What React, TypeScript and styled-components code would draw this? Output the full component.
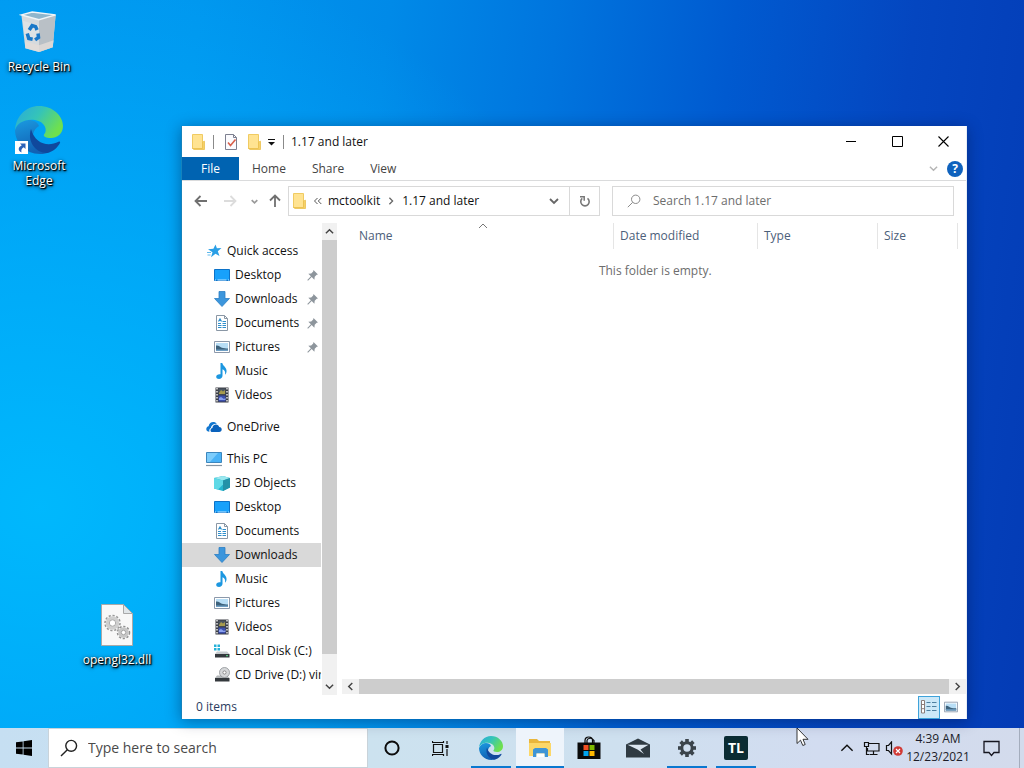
import React from "react";
import styled, { createGlobalStyle, css } from "styled-components";

const GlobalStyle = createGlobalStyle`
  *, *::before, *::after { box-sizing: border-box; }
  body { margin: 0; }
  body, button, input, table {
    font-family: "Open Sans", "Noto Sans", sans-serif;
    font-size: 12px;
    line-height: 16px;
  }
  button, input { border: 0; padding: 0; margin: 0; background: none; color: inherit; border-radius: 0; }
  svg { display: block; flex: none; }
  ul { list-style: none; margin: 0; padding: 0; }
`;

/* ---------- desktop ---------- */

const Screen = styled.div`
  min-height: 100vh;
  display: flex;
  flex-direction: column;
  overflow: hidden;
  background:
    radial-gradient(ellipse 60% 75% at 4% 66%, rgba(0, 190, 255, 0.85), rgba(0, 184, 255, 0.6) 40%, rgba(0, 180, 255, 0) 100%),
    linear-gradient(97deg, #0098f0 0%, #0095ee 18%, #008ae8 35%, #0075de 50%, #005ad0 66%, #0446c0 82%, #043bb5 100%);
`;

const Desktop = styled.main`
  position: relative;
  flex: 1;
`;

const Shortcut = styled.button<{ $x: number; $y: number }>`
  position: absolute;
  left: ${(p) => p.$x}px;
  top: ${(p) => p.$y}px;
  width: 78px;
  display: flex;
  flex-direction: column;
  align-items: center;
  gap: 4px;
  color: #fff;
  line-height: 15px;
  text-shadow: 1px 1px 1px #000, 1px 1px 2px #000, 0 1px 4px rgba(0, 0, 0, 0.9);
`;

/* ---------- explorer window ---------- */

const Window = styled.section`
  position: absolute;
  left: 181px;
  right: 57px;
  top: 126px;
  bottom: 9px;
  display: flex;
  flex-direction: column;
  background: #fff;
  border-left: 1px solid #1583bd;
  border-right: 1px solid #e8eef6;
  box-shadow: 0 2px 14px rgba(0, 20, 60, 0.42);
  color: #111;
`;

const TitleBar = styled.header`
  height: 31px;
  display: flex;
  align-items: center;
  padding-left: 9px;
`;

const Title = styled.h1`
  flex: 1;
  margin: 0;
  padding-left: 7px;
  font-size: 12px;
  font-weight: 400;
`;

const QuickButton = styled.button<{ $w: number }>`
  width: ${(p) => p.$w}px;
  height: 24px;
  display: flex;
  align-items: center;
  justify-content: center;
`;

const Separator = styled.span`
  width: 1px;
  height: 14px;
  background: #8a8a8a;
`;

const CaptionButton = styled.button`
  width: 46px;
  height: 31px;
  display: flex;
  align-items: center;
  justify-content: center;
`;

const TabRow = styled.nav`
  height: 24px;
  display: flex;
  align-items: stretch;
  border-bottom: 1px solid #dadbdc;
`;

const Tab = styled.button<{ $file?: boolean }>`
  padding: 0 ${(p) => (p.$file ? 19 : 13)}px;
  color: #444;
  ${(p) =>
    p.$file &&
    css`
      background: #0063b1;
      color: #fff;
    `}
`;

const RibbonTools = styled.div`
  margin-left: auto;
  padding-right: 3px;
  display: flex;
  align-items: center;
  gap: 9px;
`;

const HelpButton = styled.button`
  width: 16px;
  height: 16px;
  border-radius: 50%;
  background: #0f62bd;
  color: #fff;
  font-weight: 700;
`;

const AddressRow = styled.div`
  height: 42px;
  display: flex;
  align-items: center;
  padding: 0 12px 2px 7px;
`;

const NavButton = styled.button<{ $w: number }>`
  width: ${(p) => p.$w}px;
  height: 24px;
  display: flex;
  align-items: center;
  justify-content: center;
`;

const AddressBox = styled.div`
  flex: 0 1 312px;
  height: 30px;
  display: flex;
  align-items: center;
  border: 1px solid #d9d9d9;
  padding-left: 3px;
`;

const Crumb = styled.button`
  white-space: nowrap;
`;

const CrumbGap = styled.span<{ $w: number }>`
  width: ${(p) => p.$w}px;
  display: flex;
  justify-content: center;
`;

const BoxButton = styled.button<{ $divided?: boolean }>`
  width: 30px;
  height: 28px;
  display: flex;
  align-items: center;
  justify-content: center;
  ${(p) => (p.$divided ? "border-left: 1px solid #d9d9d9;" : "margin-left: auto;")}
`;

const SearchBox = styled.label`
  flex: 1;
  height: 30px;
  margin-left: 12px;
  padding-left: 14px;
  display: flex;
  align-items: center;
  gap: 12px;
  border: 1px solid #d9d9d9;
`;

const SearchInput = styled.input`
  flex: 1;
  min-width: 0;
  outline: none;
  &::placeholder {
    color: #6d6d6d;
    opacity: 1;
  }
`;

const Body = styled.div`
  flex: 1;
  min-height: 0;
  display: flex;
`;

const TreePane = styled.nav`
  width: 139px;
  padding-top: 16px;
  overflow: hidden;
`;

const TreeGroup = styled.ul`
  margin-bottom: 8px;
`;

const TreeItem = styled.button<{ $root?: boolean; $selected?: boolean }>`
  width: 100%;
  height: 24px;
  padding-left: ${(p) => (p.$root ? 24 : 32)}px;
  display: flex;
  align-items: center;
  gap: 5px;
  white-space: nowrap;
  background: ${(p) => (p.$selected ? "#d9d9d9" : "transparent")};
`;

const Pin = styled.span`
  margin-left: auto;
  padding-right: 3px;
`;

const VScroll = styled.div`
  width: 15px;
  margin-left: 1px;
  display: flex;
  flex-direction: column;
  background: #f1f1f1;
`;

const HScroll = styled.div`
  height: 15px;
  margin: 0 0 1px 5px;
  display: flex;
  background: #f1f1f1;
`;

const ScrollButton = styled.button`
  flex: 0 0 17px;
  display: flex;
  align-items: center;
  justify-content: center;
`;

const Track = styled.div<{ $rest?: number }>`
  flex: 1;
  display: flex;
  padding-bottom: ${(p) => p.$rest ?? 0}px;
`;

const Thumb = styled.span`
  flex: 1;
  background: #cdcdcd;
`;

const FilePane = styled.div`
  flex: 1;
  min-width: 0;
  display: flex;
  flex-direction: column;
`;

const FileArea = styled.div`
  flex: 1;
  padding: 0 8px 0 16px;
`;

const FileTable = styled.table`
  width: 100%;
  table-layout: fixed;
  border-collapse: collapse;
`;

const HeadCell = styled.th<{ $w?: number }>`
  ${(p) => p.$w && `width: ${p.$w}px;`}
  position: relative;
  height: 26px;
  padding: 0 0 0 6px;
  text-align: left;
  font-weight: 400;
  color: #4c607a;
  border-right: 1px solid #e5e5e5;
`;

const SortMark = styled.span`
  position: absolute;
  top: -2px;
  left: 50%;
  transform: translateX(-50%);
`;

const EmptyCell = styled.td`
  padding: 14px 0 0;
  text-align: center;
  color: #6d6d6d;
`;

const StatusBar = styled.footer`
  height: 24px;
  padding: 0 4px 0 14px;
  display: flex;
  align-items: center;
  color: #2a3c60;
`;

const ViewButton = styled.button<{ $on?: boolean }>`
  width: 22px;
  height: 23px;
  display: flex;
  align-items: center;
  justify-content: center;
  ${(p) => p.$on && "background: #cce8f8; border: 1px solid #3fa3da;"}
`;

const Spacer = styled.span`
  flex: 1;
`;

/* ---------- taskbar ---------- */

const Taskbar = styled.footer`
  height: 40px;
  display: flex;
  align-items: stretch;
  background: linear-gradient(90deg, #c6dff2 0%, #cce2ef 36%, #cee0ef 60%, #d2dcf0 80%, #d3dbec 100%);
`;

const TaskButton = styled.button<{ $run?: boolean; $active?: boolean; $first?: boolean }>`
  position: relative;
  width: 48px;
  margin-left: ${(p) => (p.$first ? 3 : p.$run === undefined ? 0 : 1)}px;
  display: flex;
  align-items: center;
  justify-content: center;
  background: ${(p) => (p.$active ? "#eef4fb" : "transparent")};
  &::after {
    content: "";
    position: absolute;
    bottom: 0;
    left: ${(p) => (p.$active ? 0 : 4)}px;
    right: ${(p) => (p.$active ? 0 : 4)}px;
    height: 2px;
    background: ${(p) => (p.$run ? "#0a78d0" : "transparent")};
  }
`;

const TaskSearch = styled.label`
  width: 320px;
  padding-left: 11px;
  display: flex;
  align-items: center;
  gap: 10px;
  background: #fff;
  border: 1px solid #c9d3da;
`;

const TaskSearchInput = styled.input`
  flex: 1;
  min-width: 0;
  font-size: 14px;
  line-height: 20px;
  outline: none;
  &::placeholder {
    color: #4a4a4a;
    opacity: 1;
  }
`;

const TrayButton = styled.button<{ $w: number }>`
  width: ${(p) => p.$w}px;
  display: flex;
  align-items: center;
  justify-content: center;
`;

const Clock = styled.button`
  width: 66px;
  line-height: 18px;
  color: #1c1c28;
  text-align: center;
`;

const ShowDesktop = styled.button`
  width: 5px;
  border-left: 1px solid #a4adbd;
`;

const TlBadge = styled.span`
  width: 24px;
  height: 24px;
  border-radius: 2px;
  background: #0b2c33;
  color: #fff;
  font-size: 14px;
  font-weight: 700;
  line-height: 24px;
`;

const Pointer = styled.span`
  position: absolute;
  left: 796px;
  bottom: -19px;
  z-index: 5;
`;

/* ---------- icons ---------- */

type IconProps = { size?: number };

const FolderIcon = () => (
  <svg width="15" height="18" viewBox="0 0 15 18">
    <path d="M1.500 1.500h10v14h-10z" fill="#ffe391" stroke="#f0cb62" />
    <path d="M11.500 9l2-.8v8.300H3l-1.500-1h10z" fill="#f6d168" stroke="#ebc04e" strokeWidth=".8" />
  </svg>
);

const CheckDocIcon = () => (
  <svg width="14" height="18" viewBox="0 0 14 18">
    <path d="M1.500 1.500h8l3 3v12h-11z" fill="#fbfbfe" stroke="#7d8090" />
    <path d="M9.500 1.500v3h3" fill="none" stroke="#7d8090" />
    <path d="M4 9.500l2.500 3 5-6" fill="none" stroke="#d8604c" strokeWidth="1.600" />
  </svg>
);

const DropMark = () => (
  <svg width="9" height="9" viewBox="0 0 9 9">
    <path d="M1 2.500h7" stroke="#111" />
    <path d="M1 5h7L4.500 8.500z" fill="#111" />
  </svg>
);

const Chevron = ({ dir, color = "#444", w = 9, stroke = 1.6 }: { dir: "up" | "down" | "left" | "right"; color?: string; w?: number; stroke?: number }) => {
  const d = {
    up: "M1 7l4-4 4 4",
    down: "M1 3l4 4 4-4",
    left: "M7 1L3 5l4 4",
    right: "M3 1l4 4-4 4",
  }[dir];
  return (
    <svg width={w} height={w} viewBox="0 0 10 10">
      <path d={d} fill="none" stroke={color} strokeWidth={stroke} />
    </svg>
  );
};

const Arrow = ({ rotate = 0, color }: { rotate?: number; color: string }) => (
  <svg width="14" height="14" viewBox="0 0 14 14">
    <path d="M13 7H2M6.500 2L1.500 7l5 5" transform={`rotate(${rotate} 7 7)`} fill="none" stroke={color} strokeWidth="1.8" />
  </svg>
);

const RefreshIcon = () => (
  <svg width="12" height="13" viewBox="0 0 12 13">
    <path d="M8.500 3.300A4.200 4.200 0 1 1 3.300 3.400" fill="none" stroke="#777" strokeWidth="1.600" />
    <path d="M1 1.800h4.200v4" fill="none" stroke="#777" strokeWidth="1.500" />
  </svg>
);

const Magnifier = ({ size = 14, color = "#8a8a8a", stroke = 1 }: IconProps & { color?: string; stroke?: number }) => (
  <svg width={size} height={size} viewBox="0 0 14 14">
    <circle cx="8.700" cy="5.300" r="4.200" fill="none" stroke={color} strokeWidth={stroke} />
    <path d="M5.700 8.300L.8 13.200" stroke={color} strokeWidth={stroke} />
  </svg>
);

const StarIcon = () => (
  <svg width="16" height="16" viewBox="0 0 16 16">
    <path d="M9.500 1.500l1.400 3.800 4.600-.3-3.700 3.300 1.700 4.700-4-2.200-4.500 3.500 1.500-5L2 6.200l5.400-.5z" fill="#2a9fe6" />
    <path d="M1 9.500h4M1.500 12h3" stroke="#5fb9ec" />
  </svg>
);

const DesktopIcon = () => (
  <svg width="16" height="16" viewBox="0 0 16 16">
    <path d="M.5 2.500h15v11H.5z" fill="#18a1fb" stroke="#0c72c8" />
    <path d="M1 13h14" stroke="#bfe4ff" strokeDasharray="1 1.500 9 1.500" />
  </svg>
);

const DownloadIcon = () => (
  <svg width="16" height="16" viewBox="0 0 16 16">
    <path d="M5 .5h6v7h4.500L8 15.500.5 7.500H5z" fill="#3c96dc" stroke="#2b7fc4" strokeWidth=".8" />
  </svg>
);

const DocumentIcon = () => (
  <svg width="16" height="16" viewBox="0 0 16 16">
    <path d="M2.500.5h8l3 3v12h-11z" fill="#fff" stroke="#8a97a5" />
    <path d="M10.500.5v3h3" fill="none" stroke="#8a97a5" />
    <path d="M4.500 6.500L6 4l1.500 2.500M8.500 6.500h3.500M4 8.500h3M8.500 8.500h3.500M4 10.500h3.500M8.500 10.500h3.500M4 12.500h3.500M8.500 12.500h3.500" fill="none" stroke="#2f8fcc" strokeWidth="1.200" />
  </svg>
);

const PictureIcon = ({ size = 16 }: IconProps) => (
  <svg width={size} height={size} viewBox="0 0 16 16">
    <path d="M.5 2.500h15v11H.5z" fill="#fff" stroke="#8c99ab" />
    <path d="M2 4h12v8H2z" fill="#b8def6" />
    <path d="M2 6.500c3-.5 4 2 7 2.500s4 .5 5 .500V12H2z" fill="#3d627c" />
    <path d="M2 10.500h12V12H2z" fill="#6f9fc4" />
  </svg>
);

const MusicIcon = () => (
  <svg width="16" height="16" viewBox="0 0 16 16">
    <path d="M6.500 0H8.300c.3 3 5 4.300 4.200 9-.2 1.200-.9 2.300-1.500 2.800.7-3-.4-4.800-2.500-5.500v6.400c0 1.900-1.600 3.300-3.500 3.300-1.600 0-2.800-1-2.800-2.300 0-1.700 2-2.900 4.300-2.400z" fill="#1c97e0" />
  </svg>
);

const VideoIcon = () => (
  <svg width="16" height="16" viewBox="0 0 16 16">
    <path d="M1.500.5h13v15h-13z" fill="#3a3d44" />
    <path d="M3 1v14M13 1v14" stroke="#e6e6e6" strokeWidth="1.500" strokeDasharray="1.500 1.500" />
    <path d="M4.500 1.500h7v6h-7z" fill="#4b5560" />
    <path d="M5 6l2-3 2 1.500 2-1.500v4H5z" fill="#a79b4d" />
    <path d="M4.500 8.500h7v6h-7z" fill="#3b4fae" />
    <path d="M5 11l2-1 3 2 1.500-1v2H5z" fill="#8aa0ee" />
  </svg>
);

const OneDriveIcon = () => (
  <svg width="16" height="16" viewBox="0 0 16 16">
    <path d="M.3 10.200c0-1.700 1-2.700 2.300-3C3 4.500 5 3 7.200 3c1.500 0 2.800.6 3.600 1.800C7.500 4.500 5.200 6.500 4.900 9c-1.400.5-1.900 2-1.500 3.700C1.500 12.500.3 11.700.3 10.200z" fill="#1277d0" />
    <path d="M4.500 11.500c0-1.500.9-2.200 1.900-2.400.1-2.200 1.700-3.600 3.500-3.600 1.700 0 2.900 1 3.300 2.500 1.600 0 2.500 1.100 2.500 2.500s-1 2.500-2.600 2.500H6.500c-1.200 0-2-.5-2-1.500z" fill="#0a62bc" />
  </svg>
);

const PcIcon = () => (
  <svg width="18" height="16" viewBox="0 0 18 16">
    <path d="M1.500 1.500h15v10h-15z" fill="#49b2f6" stroke="#3c86bd" />
    <path d="M2 2h11L5 11H2z" fill="#7cccfb" />
    <path d="M1 14.500h16" stroke="#8595a3" strokeWidth="1.200" />
  </svg>
);

const CubeIcon = () => (
  <svg width="16" height="16" viewBox="0 0 16 16">
    <path d="M0 3l9-2 7 2v9.500L9 16l-9-2.500z" fill="#23b5cf" />
    <path d="M0 3l9-2 7 2-7 2.500z" fill="#9be7ee" />
    <path d="M9 5.500l7-2.500v9.500L9 16z" fill="#2392a8" />
    <path d="M0 3l9 2.500v4L4 14.500l-4-1z" fill="#5fd9e6" />
  </svg>
);

const DiskIcon = () => (
  <svg width="16" height="16" viewBox="0 0 16 16">
    <path d="M0 1.500h2.500V4H0zM3.500 1.500H6V4H3.500zM0 5h2.500v2.500H0zM3.500 5H6v2.500H3.500z" fill="#25b1d8" />
    <path d="M3 8.500h10l2.500 2.500H1z" fill="#c7cbce" />
    <path d="M1 11h14.500v3.500H1z" fill="#34393d" />
    <path d="M12 12.700h2" stroke="#5ee08a" />
  </svg>
);

const CdIcon = () => (
  <svg width="16" height="16" viewBox="0 0 16 16">
    <path d="M3 8.500h10l2.500 2.500H1z" fill="#b4b8ba" />
    <path d="M1 11h14.500v3.500H1z" fill="#34393d" />
    <circle cx="10.500" cy="5.500" r="5" fill="#d5d7d9" stroke="#8e9295" strokeWidth=".8" />
    <circle cx="10.500" cy="5.500" r="1.600" fill="#fff" stroke="#777" strokeWidth=".8" />
  </svg>
);

const PinIcon = () => (
  <svg width="11" height="11" viewBox="0 0 11 11">
    <path d="M6.500 0L11 4.500l-1.300.3-2 2-.3 2.900-2.700-2.600L1 10.700l-.7-.7 3.600-3.700L1.300 3.700l2.900-.3 2-2z" fill="#8d959c" />
  </svg>
);

const DetailsIcon = () => (
  <svg width="16" height="14" viewBox="0 0 16 14">
    <path d="M.5.5h3v12.500h-3z" fill="#fff" stroke="#8b7d7a" />
    <path d="M.5 4.500h3M.5 8.700h3" stroke="#8b7d7a" />
    <path d="M5.500 2.500h4M11 2.500h4.500M5.500 6.500h4M11 6.500h4.500M5.500 10.500h4M11 10.500h4.500" stroke="#4f7f9f" />
  </svg>
);

const RecycleBinIcon = () => (
  <svg width="40" height="45" viewBox="0 0 40 46">
    <path d="M2 5l18 5 17-5-3 33-14 5-14-4z" fill="#d6dadd" />
    <path d="M20 10l17-5-3 33-14 5z" fill="#b9c0c6" />
    <path d="M2 5L13 2l24 3-17 5z" fill="#8fb6cc" stroke="#f1f5f7" strokeWidth="1.500" />
    <path d="M3.500 11l16.500 5v14L5.500 27z" fill="#e3e8ea" opacity=".6" />
    <path d="M5.500 32l14.500 4 15-5-1 7-14 5-14-4z" fill="#e4dcd8" opacity=".8" />
    <path d="M10 20.500l3-4.500 3.500 1 1.500 3.500M8 24l1.500 5 4 .800M16 30.500l3.500-2.500-.5-4" fill="none" stroke="#1a78c8" strokeWidth="3.600" />
  </svg>
);

const EdgeLogo = ({ size = 48 }: IconProps) => {
  const id = `edge${size}`;
  return (
    <svg width={size} height={size} viewBox="0 0 48 48">
      <defs>
        <linearGradient id={`${id}a`} x1="0" y1="0" x2="1" y2="0.500">
          <stop offset="0" stopColor="#28a9dc" />
          <stop offset=".5" stopColor="#35c4b8" />
          <stop offset="1" stopColor="#6fe04e" />
        </linearGradient>
        <linearGradient id={`${id}b`} x1="0" y1="0" x2="0.300" y2="1">
          <stop offset="0" stopColor="#1b9ae0" />
          <stop offset="1" stopColor="#1161b4" />
        </linearGradient>
      </defs>
      <path d="M0 24C0 36 10 48 25 48c4 0 7-.8 9-1.800-11-1-18-9-16-18 1-4 3-6.500 6-8.200C22 13 6 10 0 24z" fill={`url(#${id}b)`} />
      <path d="M0 24C1 10 11 0 24 0c14 0 24 10 24 20 0 8-6 12-12 12-5 0-8-1.500-7-3.500 4-4 1-13-9-14.500C10 12.500 2 17 0 24z" fill={`url(#${id}a)`} />
      <path d="M16 23c-4 12 4 24 16 24 6-1 11-6 13-10 .5-1-.5-1.800-1.500-1.200C33 41 20 38 16 23z" fill="#10489c" />
    </svg>
  );
};

const ShortcutMark = styled.span`
  position: absolute;
  left: 15px;
  top: 35px;
  width: 13px;
  height: 13px;
  background: #fff;
`;

const DllIcon = () => {
  const teeth = "2.200 1.700";
  return (
    <svg width="32" height="44" viewBox="0 0 32 44">
      <path d="M.5.5h22l9 9v32H.5z" fill="#f8f8f8" stroke="#a9a9a9" />
      <path d="M22.500.5v9h9z" fill="#e1e6e9" stroke="#a9a9a9" />
      <circle cx="11.500" cy="19" r="7.500" fill="none" stroke="#999" strokeWidth="1.600" strokeDasharray={teeth} />
      <circle cx="11.500" cy="19" r="5" fill="none" stroke="#cfcfcf" strokeWidth="3.500" />
      <circle cx="11.500" cy="19" r="3.200" fill="#fff" stroke="#999" strokeWidth=".8" />
      <circle cx="22.500" cy="28.500" r="6" fill="none" stroke="#909090" strokeWidth="1.500" strokeDasharray={teeth} />
      <circle cx="22.500" cy="28.500" r="3.800" fill="none" stroke="#c6c6c6" strokeWidth="3" />
      <circle cx="22.500" cy="28.500" r="2.200" fill="#fff" stroke="#909090" strokeWidth=".8" />
    </svg>
  );
};

const StartIcon = () => (
  <svg width="16" height="16" viewBox="0 0 16 16">
    <path d="M0 2.300L6.700 1.400v6.200H0zM7.500 1.300L16 0v7.600H7.500zM0 8.400h6.700v6.200L0 13.700zM7.500 8.400H16V16l-8.500-1.200z" fill="#000" />
  </svg>
);

const CortanaIcon = () => (
  <svg width="16" height="16" viewBox="0 0 16 16">
    <circle cx="8" cy="8" r="6.600" fill="none" stroke="#0c0c0c" strokeWidth="2" />
  </svg>
);

const TaskViewIcon = () => (
  <svg width="17" height="15" viewBox="0 0 17 15">
    <path d="M1.500 3.500h9v8h-9zM.5 0v1.500h11V0M.5 15v-1.500h11V15M15 0v3M15 8v7" fill="none" stroke="#111" strokeWidth="1.200" />
    <path d="M13.500 4h3v3h-3z" fill="#111" />
  </svg>
);

const ExplorerIcon = () => (
  <svg width="24" height="20" viewBox="0 0 24 20">
    <path d="M1 1h8l2 2h11v15H1z" fill="#e9b63c" />
    <path d="M1 5h22v13H1z" fill="#fcd768" />
    <path d="M5 19v-7.500L7 10h11l2 1.500V19h-3.500v-3.500h-8V19z" fill="#3f95d6" />
    <path d="M8.500 15.500h8V19h-8z" fill="#fff" />
  </svg>
);

const StoreIcon = () => (
  <svg width="24" height="24" viewBox="0 0 24 24">
    <path d="M8 7V4.500C8 2.500 9.500 1 11.700 1s3.800 1.500 3.800 3.500V7M10 7V4.500C10.500 2 15 1 17 4.500V7" fill="none" stroke="#0a0a0a" strokeWidth="1.200" />
    <path d="M.5 6.500h23V23H.5z" fill="#0a0a0a" />
    <path d="M6.500 9h5v5h-5z" fill="#f25022" />
    <path d="M12.500 9h5v5h-5z" fill="#7fba00" />
    <path d="M6.500 15h5v5h-5z" fill="#00a4ef" />
    <path d="M12.500 15h5v5h-5z" fill="#ffb900" />
  </svg>
);

const MailIcon = () => (
  <svg width="24" height="20" viewBox="0 0 24 20">
    <path d="M0 6.500L12 .5l12 6V19.500H0z" fill="#2f3a42" />
    <path d="M1.500 6.800h21L14.500 11.500l3.500 4.500-6.500-4.500z" fill="#dbe6f0" />
  </svg>
);

const GearIcon = () => (
  <svg width="20" height="20" viewBox="0 0 20 20">
    <circle cx="10" cy="10" r="5.200" fill="none" stroke="#3b444b" strokeWidth="3" />
    {[0, 45, 90, 135, 180, 225, 270, 315].map((a) => (
      <path key={a} d="M8.200 1h3.600v3.500H8.200z" fill="#3b444b" transform={`rotate(${a} 10 10)`} />
    ))}
  </svg>
);

const NetworkIcon = () => (
  <svg width="17" height="15" viewBox="0 0 17 15">
    <path d="M6 2.500h10v7.500H4.500V7M10.500 10v3.500M7 13.500h7.500" fill="none" stroke="#111" strokeWidth="1.200" />
    <path d="M1.500 1.500h4v4h-4zM3.500 5.500V13.500h3" fill="none" stroke="#111" strokeWidth="1.200" />
  </svg>
);

const MutedIcon = () => (
  <svg width="18" height="15" viewBox="0 0 18 15">
    <path d="M1.500 4.500h2l3-3.500v12l-3-3.500h-2z" fill="none" stroke="#111" strokeWidth="1.200" />
    <circle cx="13" cy="10" r="4.800" fill="#d13a36" />
    <path d="M11 8l4 4M15 8l-4 4" stroke="#fff" strokeWidth="1.200" />
  </svg>
);

const NoticeIcon = () => (
  <svg width="17" height="17" viewBox="0 0 17 17">
    <path d="M1 1.500h15v11h-5l-2.500 3-2.500-3H1z" fill="none" stroke="#15151f" strokeWidth="1.300" />
  </svg>
);

/* ---------- data ---------- */

type Node = { label: string; icon: React.ReactNode; pinned?: boolean; selected?: boolean };

const tree: { root: Node; items: Node[] }[] = [
  {
    root: { label: "Quick access", icon: <StarIcon /> },
    items: [
      { label: "Desktop", icon: <DesktopIcon />, pinned: true },
      { label: "Downloads", icon: <DownloadIcon />, pinned: true },
      { label: "Documents", icon: <DocumentIcon />, pinned: true },
      { label: "Pictures", icon: <PictureIcon />, pinned: true },
      { label: "Music", icon: <MusicIcon /> },
      { label: "Videos", icon: <VideoIcon /> },
    ],
  },
  { root: { label: "OneDrive", icon: <OneDriveIcon /> }, items: [] },
  {
    root: { label: "This PC", icon: <PcIcon /> },
    items: [
      { label: "3D Objects", icon: <CubeIcon /> },
      { label: "Desktop", icon: <DesktopIcon /> },
      { label: "Documents", icon: <DocumentIcon /> },
      { label: "Downloads", icon: <DownloadIcon />, selected: true },
      { label: "Music", icon: <MusicIcon /> },
      { label: "Pictures", icon: <PictureIcon /> },
      { label: "Videos", icon: <VideoIcon /> },
      { label: "Local Disk (C:)", icon: <DiskIcon /> },
      { label: "CD Drive (D:) virt", icon: <CdIcon /> },
    ],
  },
];

const IconSlot = styled.span`
  flex: none;
  width: 16px;
  display: flex;
  justify-content: center;
`;

const TreeRow = ({ node, root }: { node: Node; root?: boolean }) => (
  <li>
    <TreeItem $root={root} $selected={node.selected}>
      <IconSlot>{node.icon}</IconSlot>
      {node.label}
      {node.pinned && (
        <Pin>
          <PinIcon />
        </Pin>
      )}
    </TreeItem>
  </li>
);

export default function App() {
  return (
    <Screen>
      <GlobalStyle />
      <Desktop>
        <Shortcut $x={0} $y={10}>
          <RecycleBinIcon />
          Recycle Bin
        </Shortcut>
        <Shortcut $x={0} $y={106}>
          <EdgeLogo />
          <ShortcutMark>
            <svg width="13" height="13" viewBox="0 0 13 13">
              <path d="M5 2.500h5.500V8L8.700 6.200C6.500 7.500 6 9 6.500 11.500 3 10 2.500 6.500 6.800 4.300z" fill="#2a62b8" />
            </svg>
          </ShortcutMark>
          Microsoft Edge
        </Shortcut>
        <Shortcut $x={78} $y={604}>
          <DllIcon />
          opengl32.dll
        </Shortcut>

        <Window aria-label="1.17 and later">
          <TitleBar>
            <FolderIcon />
            <QuickButton as="span" $w={7} />
            <Separator />
            <QuickButton $w={34} aria-label="Properties">
              <CheckDocIcon />
            </QuickButton>
            <QuickButton $w={12} aria-label="New folder">
              <FolderIcon />
            </QuickButton>
            <QuickButton $w={23} aria-label="Customize toolbar">
              <DropMark />
            </QuickButton>
            <Separator />
            <Title>1.17 and later</Title>
            <CaptionButton aria-label="Minimize">
              <svg width="10" height="10" viewBox="0 0 10 10">
                <path d="M0 4.500h10" stroke="#000" />
              </svg>
            </CaptionButton>
            <CaptionButton aria-label="Maximize">
              <svg width="11" height="11" viewBox="0 0 11 11">
                <path d="M.5.5h10v10H.5z" fill="none" stroke="#000" />
              </svg>
            </CaptionButton>
            <CaptionButton aria-label="Close">
              <svg width="11" height="11" viewBox="0 0 11 11">
                <path d="M.5.5l10 10M10.500.5l-10 10" stroke="#000" strokeWidth="1.100" />
              </svg>
            </CaptionButton>
          </TitleBar>

          <TabRow>
            <Tab $file>File</Tab>
            <Tab>Home</Tab>
            <Tab>Share</Tab>
            <Tab>View</Tab>
            <RibbonTools>
              <button aria-label="Expand ribbon">
                <Chevron dir="down" color="#b5b5b5" />
              </button>
              <HelpButton aria-label="Help">?</HelpButton>
            </RibbonTools>
          </TabRow>

          <AddressRow>
            <NavButton $w={23} aria-label="Back">
              <Arrow color="#707070" />
            </NavButton>
            <NavButton $w={35} aria-label="Forward">
              <Arrow rotate={180} color="#dcdcdc" />
            </NavButton>
            <NavButton $w={14} aria-label="Recent locations">
              <Chevron dir="down" w={7} color="#9a9a9a" stroke={2.4} />
            </NavButton>
            <NavButton $w={27} aria-label="Up">
              <Arrow rotate={90} color="#707070" />
            </NavButton>
            <AddressBox>
              <FolderIcon />
              <CrumbGap $w={21}>
                <svg width="8" height="8" viewBox="0 0 8 8">
                  <path d="M3.500 1l-3 3 3 3M7.300 1l-3 3 3 3" fill="none" stroke="#555" />
                </svg>
              </CrumbGap>
              <Crumb>mctoolkit</Crumb>
              <CrumbGap $w={22}>
                <Chevron dir="right" w={8} color="#666" />
              </CrumbGap>
              <Crumb>1.17 and later</Crumb>
              <BoxButton aria-label="Previous locations">
                <Chevron dir="down" w={10} color="#666" stroke={1.8} />
              </BoxButton>
              <BoxButton $divided aria-label="Refresh">
                <RefreshIcon />
              </BoxButton>
            </AddressBox>
            <SearchBox>
              <Magnifier />
              <SearchInput aria-label="Search folder" placeholder="Search 1.17 and later" />
            </SearchBox>
          </AddressRow>

          <Body>
            <TreePane aria-label="Folders">
              {tree.map(({ root, items }) => (
                <TreeGroup key={root.label}>
                  <TreeRow node={root} root />
                  {items.map((n) => (
                    <TreeRow key={n.label} node={n} />
                  ))}
                </TreeGroup>
              ))}
            </TreePane>
            <VScroll>
              <ScrollButton aria-label="Scroll up">
                <Chevron dir="up" />
              </ScrollButton>
              <Track $rest={24}>
                <Thumb />
              </Track>
              <ScrollButton aria-label="Scroll down">
                <Chevron dir="down" />
              </ScrollButton>
            </VScroll>
            <FilePane>
              <FileArea>
                <FileTable>
                  <thead>
                    <tr>
                      <HeadCell>
                        Name
                        <SortMark>
                          <Chevron dir="up" w={10} color="#777" stroke={1} />
                        </SortMark>
                      </HeadCell>
                      <HeadCell $w={144}>Date modified</HeadCell>
                      <HeadCell $w={120}>Type</HeadCell>
                      <HeadCell $w={80}>Size</HeadCell>
                    </tr>
                  </thead>
                  <tbody>
                    <tr>
                      <EmptyCell colSpan={4}>This folder is empty.</EmptyCell>
                    </tr>
                  </tbody>
                </FileTable>
              </FileArea>
              <HScroll>
                <ScrollButton aria-label="Scroll left">
                  <Chevron dir="left" />
                </ScrollButton>
                <Track>
                  <Thumb />
                </Track>
                <ScrollButton aria-label="Scroll right">
                  <Chevron dir="right" />
                </ScrollButton>
              </HScroll>
            </FilePane>
          </Body>

          <StatusBar>
            0 items
            <Spacer />
            <ViewButton $on aria-label="Details view">
              <DetailsIcon />
            </ViewButton>
            <ViewButton aria-label="Large icons view">
              <PictureIcon size={14} />
            </ViewButton>
          </StatusBar>
        </Window>

        <Pointer aria-hidden="true">
          <svg width="13" height="20" viewBox="0 0 13 20">
            <path d="M1 1v15.500l3.500-3.300 2.300 5.300 2.400-1L7 12.300h5z" fill="#fff" stroke="#222" strokeWidth=".9" />
          </svg>
        </Pointer>
      </Desktop>

      <Taskbar>
        <TaskButton aria-label="Start">
          <StartIcon />
        </TaskButton>
        <TaskSearch>
          <Magnifier size={18} color="#222" stroke={1.1} />
          <TaskSearchInput aria-label="Search" placeholder="Type here to search" />
        </TaskSearch>
        <TaskButton aria-label="Cortana">
          <CortanaIcon />
        </TaskButton>
        <TaskButton aria-label="Task view">
          <TaskViewIcon />
        </TaskButton>
        <TaskButton $run $first aria-label="Microsoft Edge">
          <EdgeLogo size={24} />
        </TaskButton>
        <TaskButton $run $active aria-label="File Explorer">
          <ExplorerIcon />
        </TaskButton>
        <TaskButton $run={false} aria-label="Store">
          <StoreIcon />
        </TaskButton>
        <TaskButton $run={false} aria-label="Mail">
          <MailIcon />
        </TaskButton>
        <TaskButton $run aria-label="Settings">
          <GearIcon />
        </TaskButton>
        <TaskButton $run>
          <TlBadge>TL</TlBadge>
        </TaskButton>
        <Spacer />
        <TrayButton $w={24} aria-label="Show hidden icons">
          <Chevron dir="up" w={14} color="#111" stroke={1} />
        </TrayButton>
        <TrayButton $w={24} aria-label="Network">
          <NetworkIcon />
        </TrayButton>
        <TrayButton $w={22} aria-label="Sound muted">
          <MutedIcon />
        </TrayButton>
        <Clock>
          4:39 AM
          <br />
          12/23/2021
        </Clock>
        <TrayButton $w={40} aria-label="Notifications">
          <NoticeIcon />
        </TrayButton>
        <QuickButton as="span" $w={8} />
        <ShowDesktop aria-label="Show desktop" />
      </Taskbar>
    </Screen>
  );
}
